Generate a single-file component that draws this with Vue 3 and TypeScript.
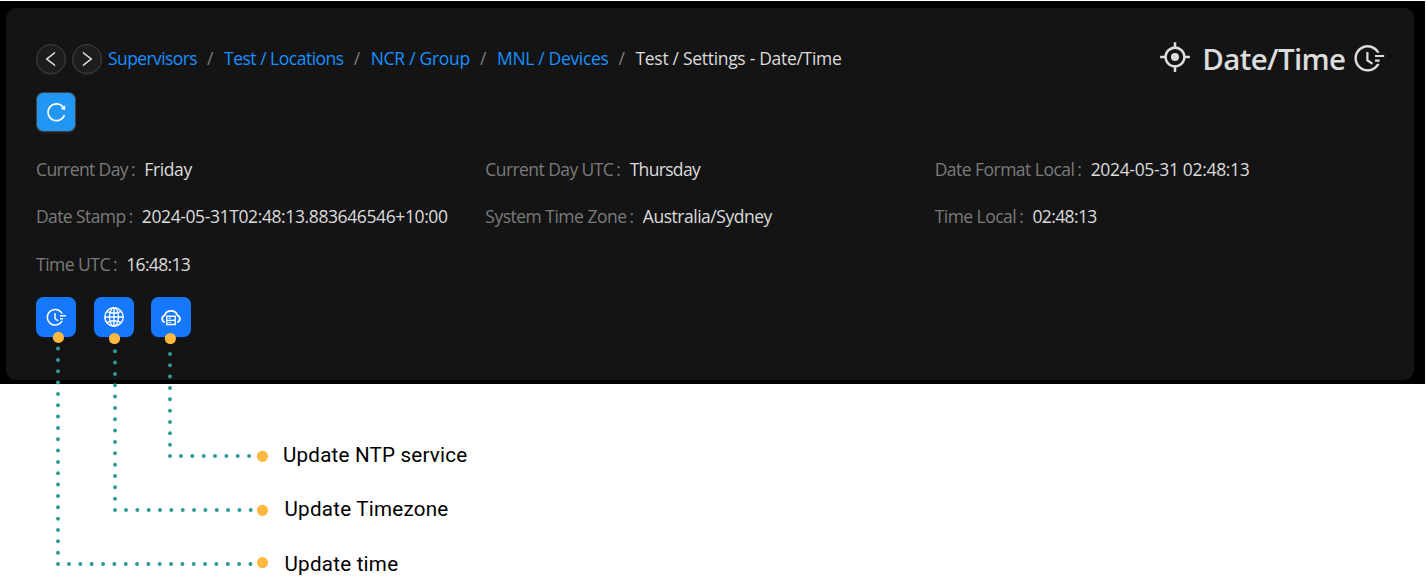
<script setup lang="ts">
import type { Directive } from 'vue'

// Spreads a label's letters so that it fills the given advance width.
const vFit: Directive<HTMLElement, number> = {
  mounted(el, { value }) {
    const count = (el.textContent ?? '').length
    const natural = el.getBoundingClientRect().width
    if (count > 0) el.style.letterSpacing = `${(value - natural) / count}px`
  },
}

interface Field { label: string; labelWidth: number; value: string; valueWidth: number }
interface Callout { label: string; width: number; x: number; top: number; dotX: number; dotY: number; y: number; endY: number; startX: number }

const crumbs = [
  { text: 'Supervisors', width: 89 },
  { text: 'Test / Locations', width: 119.7 },
  { text: 'NCR / Group', width: 99.3 },
  { text: 'MNL / Devices', width: 111.5 },
]

const fields: Field[] = [
  { label: 'Current Day', labelWidth: 92, value: 'Friday', valueWidth: 47.5 },
  { label: 'Current Day UTC', labelWidth: 128, value: 'Thursday', valueWidth: 70.4 },
  { label: 'Date Format Local', labelWidth: 139.7, value: '2024-05-31 02:48:13', valueWidth: 158.8 },
  { label: 'Date Stamp', labelWidth: 89.5, value: '2024-05-31T02:48:13.883646546+10:00', valueWidth: 305.8 },
  { label: 'System Time Zone', labelWidth: 141.2, value: 'Australia/Sydney', valueWidth: 129 },
  { label: 'Time Local', labelWidth: 81.5, value: '02:48:13', valueWidth: 64.3 },
  { label: 'Time UTC', labelWidth: 74, value: '16:48:13', valueWidth: 63.8 },
]

const callouts: Callout[] = [
  { label: 'Update NTP service', width: 184.3, x: 170, top: 353, dotX: 170.4, dotY: 338.5, y: 456, endY: 456.3, startX: 181 },
  { label: 'Update Timezone', width: 164, x: 115, top: 350, dotX: 114.5, dotY: 338.5, y: 510, endY: 510.3, startX: 126 },
  { label: 'Update time', width: 113.8, x: 58, top: 347, dotX: 58.4, dotY: 337.4, y: 564, endY: 562.6, startX: 69 },
]

const fieldTime =
  'M945 412H689c-4.4 0-8 3.6-8 8v48c0 4.4 3.6 8 8 8h256c4.4 0 8-3.6 8-8v-48c0-4.4-3.6-8-8-8zM811 548H689c-4.4 0-8 3.6-8 8v48c0 4.4 3.6 8 8 8h122c4.4 0 8-3.6 8-8v-48c0-4.4-3.6-8-8-8zM477.3 322.5H434c-6.2 0-11.2 5-11.2 11.2v248c0 3.6 1.7 6.9 4.6 9l148.9 108.6c5 3.6 12 2.6 15.6-2.4l25.7-35.1v-.1c3.6-5 2.5-12-2.5-15.6l-126.7-91.6V333.7c.1-6.2-5-11.2-11.1-11.2zM804.8 673.9H747c-5.6 0-10.9 2.9-13.9 7.7a321 321 0 01-44.5 55.7 317.17 317.17 0 01-101.3 68.3c-39.3 16.6-81 25-124 25-43.1 0-84.8-8.4-124-25-37.9-16-72-39-101.3-68.3s-52.3-63.4-68.3-101.3c-16.6-39.2-25-80.9-25-124 0-43.1 8.4-84.7 25-124 16-37.9 39-72 68.3-101.3 29.3-29.3 63.4-52.3 101.3-68.3 39.2-16.6 81-25 124-25 43.1 0 84.8 8.4 124 25 37.9 16 72 39 101.3 68.3a321 321 0 0144.5 55.7c3 4.8 8.3 7.7 13.9 7.7h57.8c6.9 0 11.3-7.2 8.2-13.3-65.2-129.7-197.4-214-345-215.7-216.1-2.7-395.6 174.2-396 390.1C71.6 727.5 246.9 903 463.2 903c149.5 0 283.9-84.6 349.8-215.8a9.18 9.18 0 00-8.2-13.3z'
const chevron =
  'M724 218.3V141c0-6.7-7.7-10.4-12.9-6.3L260.3 486.8a31.86 31.86 0 000 50.3l450.8 352.1c5.3 4.1 12.9.4 12.9-6.3v-77.3c0-4.9-2.3-9.6-6.1-12.6l-360-281 360-281.1c3.8-3 6.1-7.7 6.1-12.6z'
const reload =
  'M909.1 209.3l-56.4 44.1C775.8 155.1 656.2 92 521.9 92 290 92 102.3 279.5 102 511.5 101.7 743.7 289.8 932 521.9 932c181.3 0 335.8-115 394.6-276.1 1.5-4.2-.7-8.9-4.9-10.3l-56.7-19.5a8 8 0 00-10.1 4.8c-1.8 5-3.8 10-5.9 14.9-17.3 41-42.1 77.8-73.7 109.4A344.77 344.77 0 01655.9 829c-42.3 17.9-87.4 27-133.8 27-46.5 0-91.5-9.1-133.8-27A341.5 341.5 0 01279 755.2a342.16 342.16 0 01-73.7-109.4c-17.9-42.4-27-87.4-27-133.9s9.1-91.5 27-133.9c17.3-41 42.1-77.8 73.7-109.4 31.6-31.6 68.4-56.4 109.3-73.8 42.3-17.9 87.4-27 133.8-27 46.5 0 91.5 9.1 133.8 27a341.5 341.5 0 01109.3 73.8c9.9 9.9 19.2 20.4 27.8 31.4l-60.2 47a8 8 0 003 14.1l175.6 43c5 1.2 9.9-2.6 9.9-7.7l.8-180.9c-.1-6.6-7.8-10.3-13-6.2z'
const aim =
  'M952 474H829.8C812.5 327.6 696.4 211.5 550 194.2V72c0-4.4-3.6-8-8-8h-60c-4.4 0-8 3.6-8 8v122.2C327.6 211.5 211.5 327.6 194.2 474H72c-4.4 0-8 3.6-8 8v60c0 4.4 3.6 8 8 8h122.2C211.5 696.4 327.6 812.5 474 829.8V952c0 4.4 3.6 8 8 8h60c4.4 0 8-3.6 8-8V829.8C696.4 812.5 812.5 696.4 829.8 550H952c4.4 0 8-3.6 8-8v-60c0-4.4-3.6-8-8-8zM512 756c-134.8 0-244-109.2-244-244s109.2-244 244-244 244 109.2 244 244-109.2 244-244 244z'
</script>

<template>
  <div class="page">
    <div class="frame">
      <main class="panel">
        <header class="top">
          <nav class="crumbs">
            <button class="round">
              <svg viewBox="0 0 1024 1024"><path :d="chevron" /></svg>
            </button>
            <button class="round">
              <svg class="flip" viewBox="0 0 1024 1024"><path :d="chevron" /></svg>
            </button>
            <div class="trail">
              <template v-for="c in crumbs" :key="c.text">
                <a v-fit="c.width" class="link">{{ c.text }}</a>
                <span class="sep">/</span>
              </template>
              <span v-fit="206" class="here">Test / Settings - Date/Time</span>
            </div>
          </nav>
          <div class="heading">
            <svg class="aim" viewBox="0 0 1024 1024"><path :d="aim" /><circle cx="512" cy="512" r="122" /></svg>
            <h1 v-fit="143">Date/Time</h1>
            <svg class="clock" viewBox="0 0 1024 1024"><path :d="fieldTime" /></svg>
          </div>
        </header>

        <button class="square refresh">
          <svg viewBox="0 0 1024 1024"><path :d="reload" /></svg>
        </button>

        <dl class="fields">
          <div v-for="f in fields" :key="f.label" class="field">
            <dt><span v-fit="f.labelWidth" class="fit">{{ f.label }}</span><span class="colon">:</span></dt>
            <dd v-fit="f.valueWidth">{{ f.value }}</dd>
          </div>
        </dl>

        <div class="actions">
          <button class="square">
            <svg viewBox="0 0 1024 1024"><path :d="fieldTime" /></svg>
          </button>
          <button class="square">
            <svg class="line" viewBox="0 0 22 22">
              <circle cx="11" cy="11" r="9.2" />
              <ellipse cx="11" cy="11" rx="4.5" ry="9.2" />
              <path d="M11 1.8v18.4M1.8 11h18.4M3.7 5.4Q11 9.1 18.3 5.4M3.7 16.6Q11 12.9 18.3 16.6" />
            </svg>
          </button>
          <button class="square">
            <svg class="line" viewBox="0 0 22 22">
              <path d="M4.7 16.3A3.7 3.7 0 0 1 4.6 9.3A6.8 6.8 0 0 1 17.4 9.3A3.7 3.7 0 0 1 17.3 16.3" stroke-width="1.8" />
              <path d="M6.8 10.3h8.4v8.2H6.8zM6.8 14.4h8.4" stroke-width="1.4" />
              <path d="M8.7 12.4h1.8M8.7 16.4h1.8" stroke-width="1.3" />
            </svg>
          </button>
        </div>
      </main>
    </div>

    <ul class="labels">
      <li v-for="c in callouts" :key="c.label"><span v-fit="c.width" class="fit">{{ c.label }}</span></li>
    </ul>

    <svg class="leaders" width="1426" height="577" viewBox="0 0 1426 577">
      <g v-for="c in callouts" :key="c.label">
        <line class="dots" :x1="c.x" :y1="c.y" :x2="c.x" :y2="c.top" />
        <line class="dots" :x1="c.startX" :y1="c.y" x2="252" :y2="c.y" />
        <circle class="pin" :cx="c.dotX" :cy="c.dotY" r="5.6" />
        <circle class="pin" cx="262.5" :cy="c.endY" r="5.6" />
      </g>
    </svg>
  </div>
</template>

<style>
body {
  margin: 0;
  background: #fff;
}
</style>

<style scoped>
.page {
  position: relative;
  box-sizing: border-box;
  width: 1426px;
  height: 577px;
  padding-top: 1px;
  overflow: hidden;
  background: #fff;
  font: 17.5px/26px "Open Sans", "Noto Sans", sans-serif;
}
.frame {
  box-sizing: border-box;
  width: 1425px;
  height: 383px;
  padding: 7px 11px 4px 6px;
  background: #000;
}
.panel {
  box-sizing: border-box;
  height: 372px;
  padding: 30px 30px 0;
  border-radius: 10px;
  background: #141414;
  color: #dcdcdc;
}
.top {
  display: flex;
  justify-content: space-between;
  height: 42px;
}
.crumbs {
  display: flex;
  align-items: center;
  gap: 6px;
}
button {
  box-sizing: border-box;
  display: flex;
  align-items: center;
  justify-content: center;
  padding: 0;
}
svg {
  display: block;
  fill: currentColor;
}
.round {
  width: 30px;
  height: 30px;
  border: 1px solid #424242;
  border-radius: 50%;
  background: #1d1d1d;
  color: #dcdcdc;
  box-shadow: 0 2px 0 rgba(255, 255, 255, 0.04);
}
.round svg {
  flex: none;
  width: 20px;
  height: 20px;
}
.flip {
  transform: scaleX(-1);
}
.trail {
  display: flex;
  margin-bottom: 2px;
  white-space: nowrap;
}
.link {
  color: #1890ff;
}
.sep {
  width: 7px;
  margin: 0 10px;
  color: #7e7e7e;
}
.heading {
  display: flex;
  align-items: center;
  margin-right: -2.7px;
}
.heading h1 {
  margin: 0 6.8px 1px 10.7px;
  font-size: 29.5px;
  font-weight: 600;
  line-height: 40px;
  white-space: nowrap;
}
.aim {
  width: 34px;
  height: 34px;
  margin-bottom: 4px;
}
.clock {
  width: 34.6px;
  height: 34.6px;
  margin-bottom: 1.5px;
}
.square {
  width: 40px;
  height: 40px;
  border: 0;
  border-radius: 7.5px;
  background: #1677ff;
  color: #fff;
  box-shadow: 0 2px 0 rgba(0, 60, 180, 0.12);
}
.square svg {
  width: 22.5px;
  height: 22.5px;
}
.square .line {
  width: 22px;
  height: 22px;
  fill: none;
  stroke: currentColor;
  stroke-width: 1.4;
}
.refresh {
  margin-top: 12px;
  border: 1px solid #424242;
  background: #2196f3;
  box-shadow: 0 2px 0 rgba(255, 255, 255, 0.04);
}
.fields {
  display: grid;
  grid-template-columns: repeat(3, 1fr);
  grid-template-rows: 47px 48px 47px;
  width: 1348px;
  margin: 24px 0 0;
}
.field {
  display: flex;
  white-space: nowrap;
}
.fit {
  display: inline-block;
  white-space: nowrap;
}
dt {
  color: #7b7b7b;
}
.colon {
  display: inline-block;
  width: 3.8px;
  margin: 0 9.5px 0 3px;
}
dd {
  margin: 0;
}
.actions {
  display: flex;
  gap: 17.5px;
  margin-top: -1px;
}
.labels {
  display: flex;
  flex-direction: column;
  margin: 56px 0 0;
  padding: 0 0 0 283px;
  list-style: none;
  color: #000;
  font: 20.6px/30px Roboto, sans-serif;
}
.labels li {
  height: 54.3px;
}
.labels li + li {
  padding-left: 1.5px;
}
.leaders {
  position: absolute;
  inset: 0;
  pointer-events: none;
}
.dots {
  stroke: #2f9a98;
  stroke-width: 4;
  stroke-linecap: round;
  stroke-dasharray: 0 11.34;
}
.pin {
  fill: #ffb840;
}
</style>
